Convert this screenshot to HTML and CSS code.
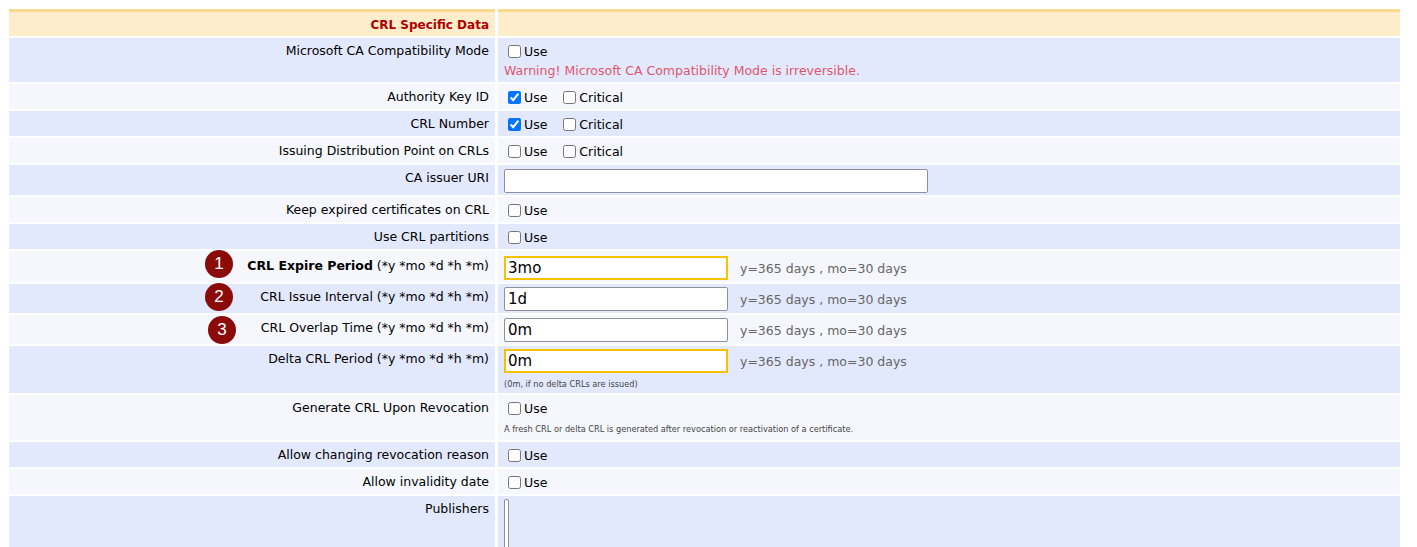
FILE: index.html
```html
<!DOCTYPE html>
<html lang="en">
<head>
    <meta charset="UTF-8">
    <title>Edit CA - CRL Specific Data</title>
    <link rel="stylesheet" href="styles.css">
</head>
<body>
<div class="form">
    <div class="head label">CRL Specific Data</div>
    <div class="head"></div>

    <div class="label">Microsoft CA Compatibility Mode</div>
    <div class="value tall">
        <label><input type="checkbox">Use</label>
        <div class="warning">Warning! Microsoft CA Compatibility Mode is irreversible.</div>
    </div>

    <div class="label alt">Authority Key ID</div>
    <div class="value alt">
        <label><input type="checkbox" checked>Use</label>
        <label class="crit"><input type="checkbox">Critical</label>
    </div>

    <div class="label">CRL Number</div>
    <div class="value">
        <label><input type="checkbox" checked>Use</label>
        <label class="crit"><input type="checkbox">Critical</label>
    </div>

    <div class="label alt">Issuing Distribution Point on CRLs</div>
    <div class="value alt">
        <label><input type="checkbox">Use</label>
        <label class="crit"><input type="checkbox">Critical</label>
    </div>

    <div class="label">CA issuer URI</div>
    <div class="value field uri">
        <input type="text" class="text wide">
    </div>

    <div class="label alt">Keep expired certificates on CRL</div>
    <div class="value alt">
        <label><input type="checkbox">Use</label>
    </div>

    <div class="label">Use CRL partitions</div>
    <div class="value">
        <label><input type="checkbox">Use</label>
    </div>

    <div class="label alt first">
        <span class="mark">1</span>
        <b>CRL Expire Period</b> (*y *mo *d *h *m)
    </div>
    <div class="value alt field expire">
        <input type="text" class="text hl" value="3mo">
        <span class="hint">y=365 days , mo=30 days</span>
    </div>

    <div class="label period">
        <span class="mark">2</span>
        CRL Issue Interval (*y *mo *d *h *m)
    </div>
    <div class="value field">
        <input type="text" class="text" value="1d">
        <span class="hint">y=365 days , mo=30 days</span>
    </div>

    <div class="label alt period">
        <span class="mark third">3</span>
        CRL Overlap Time (*y *mo *d *h *m)
    </div>
    <div class="value alt field">
        <input type="text" class="text" value="0m">
        <span class="hint">y=365 days , mo=30 days</span>
    </div>

    <div class="label period">Delta CRL Period (*y *mo *d *h *m)</div>
    <div class="value field delta">
        <input type="text" class="text hl" value="0m">
        <span class="hint">y=365 days , mo=30 days</span>
        <div class="small">(0m, if no delta CRLs are issued)</div>
    </div>

    <div class="label alt">Generate CRL Upon Revocation</div>
    <div class="value alt">
        <label><input type="checkbox">Use</label>
        <div class="small note">A fresh CRL or delta CRL is generated after revocation or reactivation of a certificate.</div>
    </div>

    <div class="label">Allow changing revocation reason</div>
    <div class="value">
        <label><input type="checkbox">Use</label>
    </div>

    <div class="label alt">Allow invalidity date</div>
    <div class="value alt">
        <label><input type="checkbox">Use</label>
    </div>

    <div class="label">Publishers</div>
    <div class="value">
        <div class="publishers"></div>
    </div>
</div>
</body>
</html>
```

FILE: styles.css
```css
body {
    margin: 0;
    background: #fff;
    font-family: "DejaVu Sans", Verdana, sans-serif;
    font-size: 12.5px;
    color: #000;
    overflow: hidden;
}
.form {
    display: grid;
    grid-template-columns: 486px 1fr;
    column-gap: 3px;
    row-gap: 2px;
    margin: 9px 17px 0 9px;
}
.label {
    background: #e3e9fc;
    text-align: right;
    padding: 5px 6px 5px 6px;
    line-height: 15px;
    position: relative;
}
.value {
    background: #e3e9fc;
    padding: 4px 6px 2px 6px;
    line-height: 15px;
    display: flex;
    flex-wrap: wrap;
    align-items: flex-start;
}
.alt {
    background: #f5f7fd;
}
.head {
    background: #feedcb;
    border-top: 3px solid #fcd98f;
    height: 24px;
    line-height: 27px;
    padding: 0 6px;
    color: #b00000;
    font-size: 12px;
    font-weight: bold;
}
.value label {
    display: inline-flex;
    align-items: center;
    height: 19px;
}
.value input[type=checkbox] {
    width: 13px;
    height: 13px;
    margin: 3px 3px 3px 4px;
}
.crit {
    margin-left: 12px;
}
.warning {
    width: 100%;
    color: #e0566b;
    margin-top: 2px;
    padding-bottom: 2px;
}
.field {
    align-items: center;
    padding-top: 3px;
    padding-bottom: 2px;
}
.field.uri {
    padding-top: 4px;
}
.field.expire {
    padding-top: 5px;
}
.text {
    box-sizing: border-box;
    width: 224px;
    height: 24px;
    margin: 0;
    padding: 1px 3px;
    font-family: "DejaVu Sans", Verdana, sans-serif;
    font-size: 15px;
    border: 1px solid #8f8f9d;
    border-radius: 2px;
    background: #fff;
    color: #000;
}
.text.wide {
    width: 424px;
}
.text.hl {
    border: 2px solid #f8c100;
    border-radius: 0;
    padding: 0 2px;
}
.first {
    padding-top: 7px;
}
.period {
    padding-top: 5px;
}
.hint {
    color: #666;
    margin-left: 12px;
}
.small {
    font-size: 8.2px;
    color: #444;
    width: 100%;
    line-height: 10px;
    padding: 6px 0 2px 0;
}
.note {
    padding: 6px 0 4px 0;
}
.mark {
    position: absolute;
    left: 196px;
    top: -1px;
    width: 28px;
    height: 28px;
    border-radius: 50%;
    background: #8b0b0b;
    color: #fff;
    font-family: "Liberation Sans", Arial, sans-serif;
    font-size: 17px;
    line-height: 28px;
    text-align: center;
}
.mark.third {
    left: 199px;
    top: 1px;
}
.publishers {
    width: 3px;
    height: 80px;
    margin-top: -1px;
    border: 1px solid #8f8f9d;
    border-radius: 2px;
    background: #fff;
}
```
